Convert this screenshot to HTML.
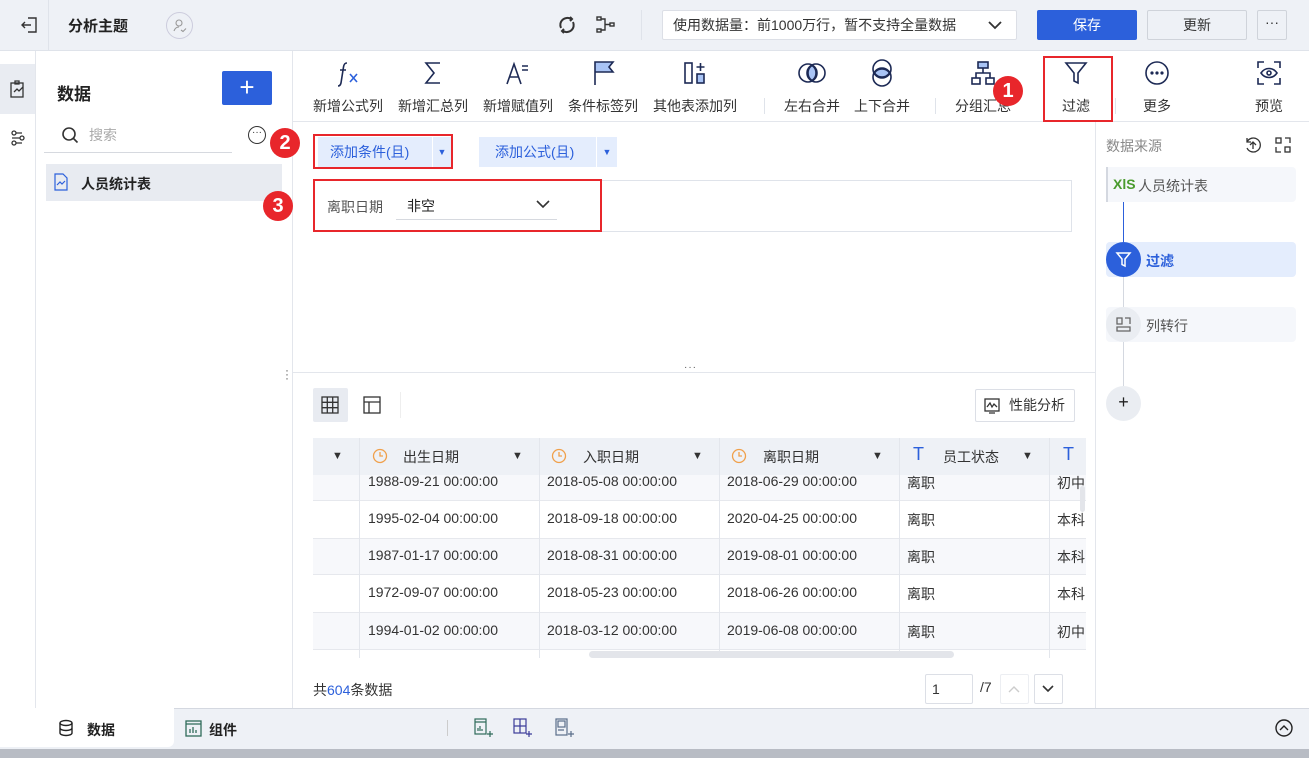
<!DOCTYPE html>
<html><head><meta charset="utf-8"><style>
*{box-sizing:border-box;margin:0;padding:0}
body{width:1309px;height:758px;overflow:hidden;font-family:"Liberation Sans","Noto Sans CJK SC",sans-serif;font-size:14px;color:#333;background:#fff;position:relative}
.abs{position:absolute}
.top{left:0;top:0;width:1309px;height:51px;background:#eef1f6;border-bottom:1px solid #dfe3ea}
.btn{position:absolute;height:30px;border-radius:2px;font-size:14px;text-align:center;line-height:30px}
.tb{position:absolute;top:58px;text-align:center;font-size:14px;color:#333}
.tb svg{display:block;margin:0 auto 8px}
.red{position:absolute;border:2px solid #e8262b}
.badge{position:absolute;width:30px;height:30px;border-radius:50%;background:#e8262b;color:#fff;font-size:20px;font-weight:bold;text-align:center;line-height:30px}
.cell{position:absolute;font-size:14px;color:#333}
</style></head><body>
<div class="abs top"></div>
<div class="abs" style="left:48px;top:0;width:1px;height:50px;background:#dfe3ea"></div>
<svg class="abs" style="left:20px;top:15px" width="20" height="20" viewBox="0 0 20 20" fill="none" stroke="#333" stroke-width="1.4"><path d="M8 3h8v14H8M2 10h9M5 7l-3 3 3 3"/></svg>
<div class="abs" style="left:68px;top:15px;font-size:15px;font-weight:bold;color:#222">分析主题</div>
<div class="abs" style="left:166px;top:12px;width:27px;height:27px;border:1px solid #ccd;border-radius:50%"></div>
<svg class="abs" style="left:172px;top:18px" width="15" height="15" viewBox="0 0 15 15" fill="none" stroke="#999" stroke-width="1.1"><circle cx="7" cy="5" r="3"/><path d="M2 13c1-3 3-4 5-4M9 12l2 1.5 3-3"/></svg>
<svg class="abs" style="left:556px;top:14px" width="22" height="22" viewBox="0 0 22 22" fill="none" stroke="#333" stroke-width="2"><path d="M5 14a7 7 0 0 1 10-9M17 8a7 7 0 0 1-10 9"/><path d="M14 3l2 2-2 2M8 19l-2-2 2-2"/></svg>
<svg class="abs" style="left:595px;top:15px" width="22" height="20" viewBox="0 0 22 20" fill="none" stroke="#333" stroke-width="1.4"><rect x="2" y="2" width="4" height="3"/><rect x="2" y="14" width="4" height="3"/><rect x="15" y="8" width="4" height="3"/><path d="M6 4h4v11H6M10 9.5h5"/></svg>
<div class="abs" style="left:641px;top:10px;width:1px;height:30px;background:#dfe3ea"></div>
<div class="btn" style="left:662px;top:10px;width:355px;background:#fff;border:1px solid #dcdfe6;text-align:left;padding-left:10px;color:#333;line-height:28px">使用数据量：前1000万行，暂不支持全量数据</div>
<svg class="abs" style="left:987px;top:17px" width="16" height="16" viewBox="0 0 16 16" fill="none" stroke="#333" stroke-width="1.8"><path d="M2 5l6 6 6-6"/></svg>
<div class="btn" style="left:1037px;top:10px;width:100px;background:#2c60db;color:#fff">保存</div>
<div class="btn" style="left:1147px;top:10px;width:100px;background:#eef1f6;border:1px solid #cfd3da;line-height:28px">更新</div>
<div class="btn" style="left:1257px;top:10px;width:30px;background:#eef1f6;border:1px solid #cfd3da;line-height:22px">···</div>

<div class="abs" style="left:0;top:51px;width:36px;height:657px;background:#fff;border-right:1px solid #e3e6ec"></div>
<div class="abs" style="left:0;top:64px;width:35px;height:50px;background:#e9ecf2"></div>
<svg class="abs" style="left:8px;top:79px" width="20" height="20" viewBox="0 0 20 20" fill="none" stroke="#333" stroke-width="1.3"><rect x="3" y="4" width="12" height="14"/><path d="M7 2h4v3H7zM6 13l3-3 2 2 4-4"/></svg>
<svg class="abs" style="left:8px;top:128px" width="20" height="20" viewBox="0 0 20 20" fill="none" stroke="#333" stroke-width="1.3"><circle cx="6" cy="5" r="2"/><circle cx="14" cy="10" r="2"/><circle cx="6" cy="15" r="2"/><path d="M8 5h6M4 10h8M8 15h6"/></svg>

<div class="abs" style="left:36px;top:51px;width:257px;height:657px;background:#fff;border-right:1px solid #e3e6ec"></div>
<div class="abs" style="left:57px;top:80px;font-size:17px;font-weight:bold;color:#222">数据</div>
<div class="abs" style="left:222px;top:71px;width:50px;height:34px;background:#2c60db;border-radius:2px;color:#fff;font-size:26px;text-align:center;line-height:32px">+</div>
<svg class="abs" style="left:60px;top:125px" width="20" height="20" viewBox="0 0 20 20" fill="none" stroke="#333" stroke-width="1.6"><circle cx="9" cy="9" r="6"/><path d="M13.5 13.5l4 4"/></svg>
<div class="abs" style="left:89px;top:125px;color:#aaa">搜索</div>
<div class="abs" style="left:44px;top:152px;width:188px;height:1px;background:#d6d9df"></div>
<div class="abs" style="left:248px;top:126px;width:18px;height:18px;border:1.3px solid #333;border-radius:50%;font-size:10px;line-height:12px;text-align:center">···</div>
<div class="abs" style="left:46px;top:164px;width:236px;height:37px;background:#e8ebf1"></div>
<svg class="abs" style="left:53px;top:173px" width="16" height="18" viewBox="0 0 16 18" fill="none" stroke="#2c60db" stroke-width="1.2"><path d="M2 1h8l4 4v12H2z"/><path d="M4 12l3-3 2 2 3-3"/></svg>
<div class="abs" style="left:81px;top:174px;font-weight:bold;color:#222">人员统计表</div>
<div class="abs" style="left:285px;top:368px;color:#666;font-size:12px;line-height:4px">·<br>·<br>·</div>

<div class="abs" style="left:293px;top:121px;width:1016px;height:1px;background:#e3e6ec"></div>
<div class="tb" style="left:313px">
<svg width="30" height="30" viewBox="0 0 30 30" fill="none" stroke="#1d2a55" stroke-width="1.6"><path d="M14 5c-2 0-3 1-3.5 4L8 25c-.5 2-1.5 3-3 3M7 12h6"/><path d="M17 16l7 8M24 16l-7 8" stroke="#2c60db"/></svg>新增公式列</div>
<div class="tb" style="left:398px"><svg width="30" height="30" viewBox="0 0 30 30" fill="none" stroke="#1d2a55" stroke-width="1.6"><path d="M22 5H8l8 10-8 10h14"/></svg>新增汇总列</div>
<div class="tb" style="left:483px"><svg width="30" height="30" viewBox="0 0 30 30" fill="none" stroke="#1d2a55" stroke-width="1.6"><path d="M4 26l7-20 7 20M7 19h8M19 8h6M19 12h6"/></svg>新增赋值列</div>
<div class="tb" style="left:568px"><svg width="30" height="30" viewBox="0 0 30 30" fill="none" stroke="#1d2a55" stroke-width="1.6"><path d="M7 27V4h18l-4 5 4 5H7" fill="#a9c4f5"/></svg>条件标签列</div>
<div class="tb" style="left:653px"><svg width="30" height="30" viewBox="0 0 30 30" fill="none" stroke="#1d2a55" stroke-width="1.6"><rect x="5" y="5" width="7" height="20"/><rect x="17" y="16" width="7" height="9" fill="#a9c4f5"/><path d="M20.5 5v8M16.5 9h8"/></svg>其他表添加列</div>
<div class="abs" style="left:764px;top:98px;width:1px;height:16px;background:#dfe3ea"></div>
<div class="tb" style="left:784px"><svg width="30" height="30" viewBox="0 0 30 30" fill="none" stroke="#1d2a55" stroke-width="1.6"><circle cx="11" cy="15" r="9"/><circle cx="19" cy="15" r="9"/><path d="M15 7.5a9 9 0 0 1 0 15a9 9 0 0 1 0-15z" fill="#a9c4f5"/></svg>左右合并</div>
<div class="tb" style="left:854px"><svg width="30" height="30" viewBox="0 0 30 30" fill="none" stroke="#1d2a55" stroke-width="1.6"><circle cx="15" cy="11" r="9"/><circle cx="15" cy="19" r="9"/><path d="M7.5 15a9 9 0 0 1 15 0a9 9 0 0 1-15 0z" fill="#a9c4f5"/></svg>上下合并</div>
<div class="abs" style="left:935px;top:98px;width:1px;height:16px;background:#dfe3ea"></div>
<div class="tb" style="left:955px"><svg width="30" height="30" viewBox="0 0 30 30" fill="none" stroke="#1d2a55" stroke-width="1.6"><rect x="10" y="4" width="10" height="6" fill="#a9c4f5"/><rect x="4" y="20" width="8" height="6"/><rect x="18" y="20" width="8" height="6"/><path d="M15 10v5M8 20v-5h14v5"/></svg>分组汇总</div>
<div class="tb" style="left:1061px"><svg width="30" height="30" viewBox="0 0 30 30" fill="none" stroke="#1d2a55" stroke-width="1.6"><path d="M5 5h20l-8 10v10l-4-2v-8z"/></svg>过滤</div>
<div class="abs" style="left:1115px;top:98px;width:1px;height:16px;background:#dfe3ea"></div>
<div class="tb" style="left:1142px"><svg width="30" height="30" viewBox="0 0 30 30" fill="none" stroke="#1d2a55" stroke-width="1.6"><circle cx="15" cy="15" r="11"/><circle cx="10" cy="15" r=".8" fill="#1d2a55"/><circle cx="15" cy="15" r=".8" fill="#1d2a55"/><circle cx="20" cy="15" r=".8" fill="#1d2a55"/></svg>更多</div>
<div class="tb" style="left:1254px"><svg width="30" height="30" viewBox="0 0 30 30" fill="none" stroke="#1d2a55" stroke-width="1.6"><path d="M4 10V4h6M20 4h6v6M26 20v6h-6M10 26H4v-6"/><path d="M7 15c4-6 12-6 16 0c-4 6-12 6-16 0z"/><circle cx="15" cy="15" r="2"/></svg>预览</div>
<div class="red" style="left:1043px;top:56px;width:70px;height:66px"></div>
<div class="badge" style="left:993px;top:76px">1</div>

<div class="abs" style="left:318px;top:137px;width:114px;height:30px;background:#e4edfd;color:#2c60db;line-height:30px;padding-left:12px">添加条件(且)</div>
<div class="abs" style="left:433px;top:137px;width:18px;height:30px;background:#e4edfd;color:#2c60db;font-size:9px;line-height:30px;text-align:center">▼</div>
<div class="red" style="left:313px;top:134px;width:140px;height:35px"></div>
<div class="badge" style="left:270px;top:128px">2</div>
<div class="abs" style="left:479px;top:137px;width:117px;height:30px;background:#e4edfd;color:#2c60db;line-height:30px;padding-left:16px">添加公式(且)</div>
<div class="abs" style="left:597px;top:137px;width:20px;height:30px;background:#e4edfd;color:#2c60db;font-size:9px;line-height:30px;text-align:center">▼</div>
<div class="abs" style="left:313px;top:180px;width:759px;height:52px;border:1px solid #dfe3ea"></div>
<div class="red" style="left:313px;top:179px;width:289px;height:53px"></div>
<div class="badge" style="left:263px;top:191px">3</div>
<div class="abs" style="left:327px;top:197px;color:#555">离职日期</div>
<div class="abs" style="left:407px;top:196px;color:#222">非空</div>
<div class="abs" style="left:396px;top:219px;width:161px;height:1px;background:#d6d9df"></div>
<svg class="abs" style="left:535px;top:196px" width="16" height="16" viewBox="0 0 16 16" fill="none" stroke="#333" stroke-width="1.6"><path d="M2 5l6 6 6-6"/></svg>

<div class="abs" style="left:293px;top:372px;width:802px;height:1px;background:#e3e6ec"></div>
<div class="abs" style="left:684px;top:362px;font-size:10px;color:#555;letter-spacing:1px">···</div>

<div class="abs" style="left:313px;top:388px;width:35px;height:34px;background:#e8ebf1;border-radius:2px"></div>
<svg class="abs" style="left:320px;top:395px" width="20" height="20" viewBox="0 0 20 20" fill="none" stroke="#333" stroke-width="1.3"><rect x="2" y="2" width="16" height="16"/><path d="M7.3 2v16M12.7 2v16M2 7.3h16M2 12.7h16"/></svg>
<svg class="abs" style="left:362px;top:395px" width="20" height="20" viewBox="0 0 20 20" fill="none" stroke="#333" stroke-width="1.3"><rect x="2" y="2" width="16" height="16"/><path d="M2 7h16M7 7v11"/></svg>
<div class="abs" style="left:400px;top:392px;width:1px;height:26px;background:#eee"></div>
<div class="abs" style="left:975px;top:389px;width:100px;height:33px;border:1px solid #dcdfe6;border-radius:2px;padding-left:33px;line-height:31px">性能分析</div>
<svg class="abs" style="left:983px;top:397px" width="18" height="18" viewBox="0 0 18 18" fill="none" stroke="#333" stroke-width="1.3"><rect x="2" y="2" width="14" height="12"/><path d="M4 10l3-4 2 4 2-3 3 3M6 16h6"/></svg>

<div class="abs" style="left:313px;top:438px;width:773px;height:37px;background:#eef1f6"></div>
<div class="abs" style="left:313px;top:475px;width:773px;height:25px;background:#f7f8fb"></div>
<div class="abs" style="left:313px;top:538px;width:773px;height:37px;background:#f7f8fb;border-top:1px solid #e6e8ed;border-bottom:1px solid #e6e8ed"></div>
<div class="abs" style="left:313px;top:612px;width:773px;height:38px;background:#f7f8fb;border-top:1px solid #e6e8ed;border-bottom:1px solid #e6e8ed"></div>
<div class="abs" style="left:313px;top:500px;width:773px;height:1px;background:#e6e8ed"></div>
<div class="abs" style="left:359px;top:438px;width:1px;height:220px;background:#e3e6ec"></div>
<div class="abs" style="left:539px;top:438px;width:1px;height:220px;background:#e3e6ec"></div>
<div class="abs" style="left:719px;top:438px;width:1px;height:220px;background:#e3e6ec"></div>
<div class="abs" style="left:899px;top:438px;width:1px;height:220px;background:#e3e6ec"></div>
<div class="abs" style="left:1049px;top:438px;width:1px;height:220px;background:#e3e6ec"></div>
<div class="cell" style="left:332px;top:450px;font-size:11px">▼</div>
<svg class="abs" style="left:372px;top:448px" width="16" height="16" viewBox="0 0 16 16" fill="none" stroke="#f0a04b" stroke-width="1.3"><circle cx="8" cy="8" r="6.5"/><path d="M8 4v4h3"/></svg>
<div class="cell" style="left:403px;top:447px">出生日期</div><div class="cell" style="left:512px;top:450px;font-size:11px">▼</div>
<svg class="abs" style="left:551px;top:448px" width="16" height="16" viewBox="0 0 16 16" fill="none" stroke="#f0a04b" stroke-width="1.3"><circle cx="8" cy="8" r="6.5"/><path d="M8 4v4h3"/></svg>
<div class="cell" style="left:583px;top:447px">入职日期</div><div class="cell" style="left:692px;top:450px;font-size:11px">▼</div>
<svg class="abs" style="left:731px;top:448px" width="16" height="16" viewBox="0 0 16 16" fill="none" stroke="#f0a04b" stroke-width="1.3"><circle cx="8" cy="8" r="6.5"/><path d="M8 4v4h3"/></svg>
<div class="cell" style="left:763px;top:447px">离职日期</div><div class="cell" style="left:872px;top:450px;font-size:11px">▼</div>
<div class="cell" style="left:913px;top:444px;color:#2c60db;font-size:18px">T</div>
<div class="cell" style="left:943px;top:447px">员工状态</div><div class="cell" style="left:1022px;top:450px;font-size:11px">▼</div>
<div class="cell" style="left:1063px;top:444px;color:#2c60db;font-size:18px">T</div>

<div class="cell" style="left:368px;top:473px">1988-09-21 00:00:00</div><div class="cell" style="left:547px;top:473px">2018-05-08 00:00:00</div><div class="cell" style="left:727px;top:473px">2018-06-29 00:00:00</div><div class="cell" style="left:907px;top:473px">离职</div><div class="cell" style="left:1057px;top:473px">初中</div>
<div class="cell" style="left:368px;top:510px">1995-02-04 00:00:00</div><div class="cell" style="left:547px;top:510px">2018-09-18 00:00:00</div><div class="cell" style="left:727px;top:510px">2020-04-25 00:00:00</div><div class="cell" style="left:907px;top:510px">离职</div><div class="cell" style="left:1057px;top:510px">本科</div>
<div class="cell" style="left:368px;top:547px">1987-01-17 00:00:00</div><div class="cell" style="left:547px;top:547px">2018-08-31 00:00:00</div><div class="cell" style="left:727px;top:547px">2019-08-01 00:00:00</div><div class="cell" style="left:907px;top:547px">离职</div><div class="cell" style="left:1057px;top:547px">本科</div>
<div class="cell" style="left:368px;top:584px">1972-09-07 00:00:00</div><div class="cell" style="left:547px;top:584px">2018-05-23 00:00:00</div><div class="cell" style="left:727px;top:584px">2018-06-26 00:00:00</div><div class="cell" style="left:907px;top:584px">离职</div><div class="cell" style="left:1057px;top:584px">本科</div>
<div class="cell" style="left:368px;top:622px">1994-01-02 00:00:00</div><div class="cell" style="left:547px;top:622px">2018-03-12 00:00:00</div><div class="cell" style="left:727px;top:622px">2019-06-08 00:00:00</div><div class="cell" style="left:907px;top:622px">离职</div><div class="cell" style="left:1057px;top:622px">初中</div>
<div class="abs" style="left:589px;top:651px;width:365px;height:7px;background:#e3e5ea;border-radius:4px"></div>
<div class="abs" style="left:1080px;top:486px;width:5px;height:26px;background:#e3e5ea;border-radius:3px"></div>

<div class="abs" style="left:313px;top:680px">共<span style="color:#2c60db">604</span>条数据</div>
<div class="abs" style="left:925px;top:674px;width:48px;height:30px;border:1px solid #dcdfe6;border-radius:2px;padding-left:6px;line-height:28px">1</div>
<div class="abs" style="left:980px;top:679px">/7</div>
<div class="abs" style="left:1000px;top:674px;width:29px;height:30px;border:1px solid #eceef2;border-radius:2px"></div>
<svg class="abs" style="left:1007px;top:682px" width="14" height="14" viewBox="0 0 14 14" fill="none" stroke="#ccc" stroke-width="1.4"><path d="M2 10l5-5 5 5"/></svg>
<div class="abs" style="left:1034px;top:674px;width:29px;height:30px;border:1px solid #dcdfe6;border-radius:2px"></div>
<svg class="abs" style="left:1041px;top:682px" width="14" height="14" viewBox="0 0 14 14" fill="none" stroke="#333" stroke-width="1.6"><path d="M2 4l5 5 5-5"/></svg>

<div class="abs" style="left:1095px;top:122px;width:1px;height:586px;background:#e3e6ec"></div>
<div class="abs" style="left:1106px;top:136px;color:#888">数据来源</div>
<svg class="abs" style="left:1243px;top:135px" width="20" height="20" viewBox="0 0 20 20" fill="none" stroke="#333" stroke-width="1.3"><path d="M4 7a7 7 0 1 1 0 6M4 3v4h4M10 14V7M7 10l3-3 3 3"/></svg>
<svg class="abs" style="left:1273px;top:135px" width="20" height="20" viewBox="0 0 20 20" fill="none" stroke="#333" stroke-width="1.3"><rect x="3" y="3" width="5" height="5"/><rect x="12" y="12" width="5" height="5"/><path d="M12 3h5v5M3 12v5h5"/></svg>
<div class="abs" style="left:1106px;top:167px;width:190px;height:35px;background:#f5f7fb;border-left:2px solid #d4d8e0;border-radius:0 4px 4px 0"></div>
<div class="abs" style="left:1113px;top:176px;color:#4a9b2e;font-weight:bold;font-size:14px">XlS</div>
<div class="abs" style="left:1138px;top:176px;color:#555">人员统计表</div>
<div class="abs" style="left:1123px;top:202px;width:1px;height:40px;background:#2c60db"></div>
<div class="abs" style="left:1123px;top:276px;width:1px;height:110px;background:#d4d8e0"></div>
<div class="abs" style="left:1106px;top:242px;width:190px;height:35px;background:#e4edfd;border-radius:4px"></div>
<div class="abs" style="left:1106px;top:242px;width:35px;height:35px;background:#2c60db;border-radius:50%"></div>
<svg class="abs" style="left:1114px;top:250px" width="19" height="19" viewBox="0 0 19 19" fill="none" stroke="#fff" stroke-width="1.5"><path d="M3 3h13l-5 6v7l-3-1.5V9z"/></svg>
<div class="abs" style="left:1146px;top:251px;color:#2c60db;font-weight:bold">过滤</div>
<div class="abs" style="left:1106px;top:307px;width:190px;height:35px;background:#f5f7fb;border-radius:4px"></div>
<div class="abs" style="left:1106px;top:307px;width:35px;height:35px;background:#eaedf2;border-radius:50%"></div>
<svg class="abs" style="left:1114px;top:315px" width="19" height="19" viewBox="0 0 19 19" fill="none" stroke="#666" stroke-width="1.3"><path d="M3 3h5v6H3zM11 3h5v6M3 12h13v4H3z"/></svg>
<div class="abs" style="left:1146px;top:316px;color:#555">列转行</div>
<div class="abs" style="left:1106px;top:386px;width:35px;height:35px;background:#eaedf2;border-radius:50%;text-align:center;line-height:33px;font-size:18px;color:#222">+</div>

<div class="abs" style="left:0;top:708px;width:1309px;height:41px;background:#eef1f6;border-top:1px solid #d4d8e0"></div>
<div class="abs" style="left:0;top:708px;width:174px;height:39px;background:#fff;border-radius:0 0 6px 0"></div>
<svg class="abs" style="left:58px;top:719px" width="16" height="18" viewBox="0 0 16 18" fill="none" stroke="#222" stroke-width="1.4"><ellipse cx="8" cy="4" rx="6" ry="2.5"/><path d="M2 4v10c0 1.5 3 2.5 6 2.5s6-1 6-2.5V4M2 9c0 1.5 3 2.5 6 2.5s6-1 6-2.5"/></svg>
<div class="abs" style="left:87px;top:720px;font-weight:bold;color:#222">数据</div>
<svg class="abs" style="left:185px;top:720px" width="17" height="17" viewBox="0 0 17 17" fill="none" stroke="#2f6b5a" stroke-width="1.3"><rect x="1" y="1" width="15" height="15"/><path d="M1 4h15M5 13V9M8 13V7M11 13V10"/></svg>
<div class="abs" style="left:209px;top:720px;font-weight:bold;color:#222">组件</div>
<div class="abs" style="left:447px;top:720px;width:1px;height:16px;background:#ccc"></div>
<svg class="abs" style="left:474px;top:718px" width="20" height="20" viewBox="0 0 20 20" fill="none" stroke="#2f6b5a" stroke-width="1.2"><rect x="1" y="1" width="11" height="15"/><path d="M1 4h11M4 13v-3M6 13V8M8 13v-2M13 16h6M16 13v6"/></svg>
<svg class="abs" style="left:513px;top:718px" width="20" height="20" viewBox="0 0 20 20" fill="none" stroke="#3c3c9a" stroke-width="1.2"><rect x="1" y="1" width="12" height="14"/><path d="M7 1v14M1 8h12M13 16h6M16 13v6"/></svg>
<svg class="abs" style="left:555px;top:718px" width="20" height="20" viewBox="0 0 20 20" fill="none" stroke="#5a6e8a" stroke-width="1.2"><rect x="1" y="1" width="11" height="16"/><rect x="3" y="3" width="7" height="6"/><path d="M3 12h6M13 16h6M16 13v6"/></svg>
<svg class="abs" style="left:1274px;top:718px" width="20" height="20" viewBox="0 0 20 20" fill="none" stroke="#222" stroke-width="1.4"><circle cx="10" cy="10" r="8"/><path d="M6 12l4-4 4 4"/></svg>
<div class="abs" style="left:0;top:749px;width:1309px;height:9px;background:#b8bcc4"></div>
</body></html>
